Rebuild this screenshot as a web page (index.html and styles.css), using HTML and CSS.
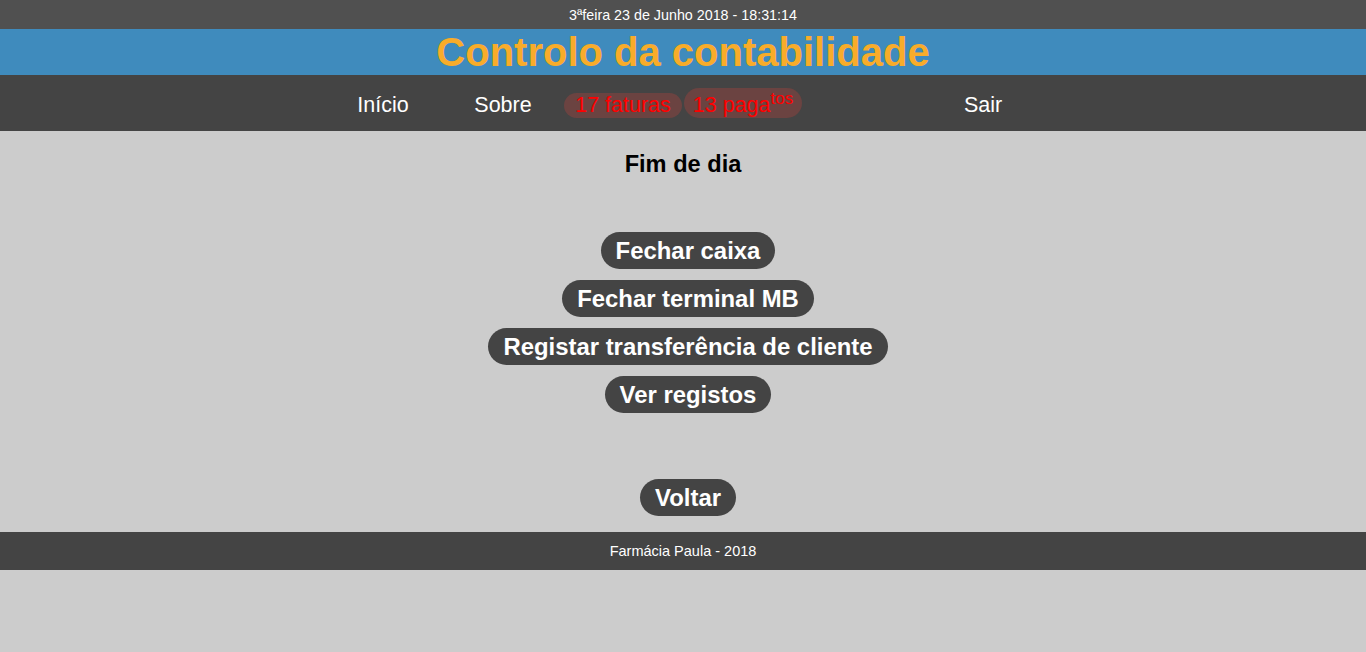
FILE: index.html
```html
<!DOCTYPE html>
<html lang="pt">
<head>
<meta charset="utf-8">
<title>Controlo da contabilidade</title>
<link rel="stylesheet" href="styles.css">
</head>
<body>
<div class="datebar">3ªfeira 23 de Junho 2018 - 18:31:14</div>
<header class="titlebar"><h1>Controlo da contabilidade</h1></header>
<nav class="nav">
  <div class="cell"><a class="link">Início</a></div>
  <div class="cell"><a class="link">Sobre</a></div>
  <div class="cell"><span class="badge">17 faturas</span></div>
  <div class="cell"><span class="badge">13 paga<sup>tos</sup></span></div>
  <div class="cell"></div>
  <div class="cell"><a class="link">Sair</a></div>
</nav>
<main class="main">
  <h2 class="heading">Fim de dia</h2>
  <div class="actions">
    <button class="btn">Fechar caixa</button>
    <button class="btn">Fechar terminal MB</button>
    <button class="btn">Registar transferência de cliente</button>
    <button class="btn">Ver registos</button>
  </div>
  <div class="back"><button class="btn">Voltar</button></div>
</main>
<footer class="footer">Farmácia Paula - 2018</footer>
</body>
</html>
```
FILE: styles.css
```css
html, body {
  margin: 0;
  padding: 0;
  background: #cccccc;
  font-family: "Liberation Sans", Arial, sans-serif;
}
.datebar {
  height: 29px;
  background: #505050;
  color: #ffffff;
  font-size: 14.3px;
  line-height: 30px;
  text-align: center;
}
.titlebar {
  height: 46px;
  background: #3f8bbd;
  display: flex;
  align-items: center;
  justify-content: center;
}
.titlebar h1 {
  margin: 0;
  color: #f8ac2a;
  font-size: 40px;
  font-weight: bold;
  line-height: 46px;
}
.nav {
  height: 56px;
  background: #444444;
  display: flex;
  justify-content: center;
  align-items: flex-end;
}
.cell {
  width: 120px;
  height: 43px;
  display: flex;
  justify-content: center;
  align-items: flex-end;
  padding-bottom: 13px;
}
.link {
  color: #ffffff;
  font-size: 21.5px;
  line-height: 26px;
}
.badge {
  display: block;
  box-sizing: border-box;
  width: 118px;
  text-align: center;
  color: #ff0000;
  font-size: 21.5px;
  line-height: 25px;
  background: #6b4341;
  border-radius: 13px;
  white-space: nowrap;
}
.badge sup {
  font-size: 17px;
  line-height: 0;
  vertical-align: 8px;
}
.cell:nth-child(4) .badge {
  padding-top: 5px;
  border-radius: 15px;
}
.main {
  height: 401px;
  display: flex;
  flex-direction: column;
  align-items: center;
}
.heading {
  margin: 19px 0 0;
  font-size: 23.6px;
  line-height: 28px;
  font-weight: bold;
  color: #000000;
}
.actions {
  margin-top: 54px;
  padding-left: 10px;
  display: flex;
  flex-direction: column;
  align-items: center;
  gap: 11px;
}
.btn {
  font-family: "Liberation Sans", Arial, sans-serif;
  font-size: 23.9px;
  font-weight: bold;
  color: #ffffff;
  background: #444444;
  border: none;
  border-radius: 19px;
  height: 37px;
  padding: 0 15px;
  line-height: 37px;
}
.back {
  margin-top: 66px;
  padding-left: 10px;
}
.footer {
  height: 38px;
  background: #444444;
  color: #ffffff;
  font-size: 14.5px;
  line-height: 38px;
  text-align: center;
}
```
